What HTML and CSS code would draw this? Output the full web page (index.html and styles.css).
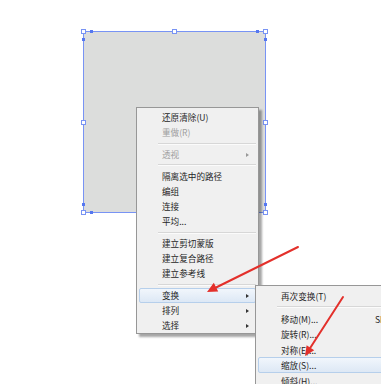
FILE: index.html
```html
<!DOCTYPE html>
<html>
<head>
<meta charset="utf-8">
<link rel="stylesheet" href="styles.css">
</head>
<body>
<div class="stage">
  <div class="shape">
    <span class="h sq" style="left:-3px;top:-3px"></span>
    <span class="h sq" style="left:88px;top:-3px"></span>
    <span class="h sq" style="right:-3px;top:-3px"></span>
    <span class="h sq" style="left:-3px;top:88px"></span>
    <span class="h sq" style="right:-3px;top:88px"></span>
    <span class="h sq" style="left:-3px;bottom:-3px"></span>
    <span class="h sq" style="right:-3px;bottom:-3px"></span>
    <span class="h dot" style="left:6px;top:-2px"></span>
    <span class="h dot" style="left:-2px;top:6px"></span>
    <span class="h dot" style="right:6px;top:-2px"></span>
    <span class="h dot" style="right:-2px;top:6px"></span>
    <span class="h dot" style="left:-2px;bottom:6px"></span>
    <span class="h dot" style="left:6px;bottom:-2px"></span>
    <span class="h dot" style="right:-2px;bottom:6px"></span>
  </div>

  <div class="menu main">
    <div class="item">还原清除(U)</div>
    <div class="item dis">重做(R)</div>
    <div class="sep"></div>
    <div class="item dis sub">透视</div>
    <div class="sep"></div>
    <div class="item">隔离选中的路径</div>
    <div class="item">编组</div>
    <div class="item">连接</div>
    <div class="item">平均...</div>
    <div class="sep"></div>
    <div class="item">建立剪切蒙版</div>
    <div class="item">建立复合路径</div>
    <div class="item">建立参考线</div>
    <div class="sep"></div>
    <div class="item sub hi">变换</div>
    <div class="item sub">排列</div>
    <div class="item sub">选择</div>
  </div>

  <div class="menu submenu">
    <div class="item">再次变换(T)</div>
    <div class="sep"></div>
    <div class="item">移动(M)...<span class="key">Shift+Ctrl+M</span></div>
    <div class="item">旋转(R)...</div>
    <div class="item">对称(E)...</div>
    <div class="item hi">缩放(S)...</div>
    <div class="item">倾斜(H)...</div>
  </div>

  <svg class="arrows" width="381" height="384" viewBox="0 0 381 384">
    <line x1="298" y1="247" x2="214" y2="288.5" stroke="#e3302b" stroke-width="2" stroke-linecap="round"/>
    <polygon points="207,292 218.2,291.6 213.8,282.8" fill="#e3302b"/>
    <line x1="343" y1="297" x2="309.5" y2="349" stroke="#e3302b" stroke-width="2" stroke-linecap="round"/>
    <polygon points="305,356 314.2,350.2 306.6,345.2" fill="#e3302b"/>
  </svg>
</div>
</body>
</html>
```
FILE: styles.css
```css
html, body {
  margin: 0;
  padding: 0;
  background: #fff;
}
.stage {
  position: relative;
  width: 381px;
  height: 384px;
  overflow: hidden;
  background: #fff;
  font-family: "Noto Sans CJK SC", "Microsoft YaHei", sans-serif;
}
.shape {
  position: absolute;
  left: 83px;
  top: 31px;
  width: 183px;
  height: 182px;
  box-sizing: border-box;
  background: #dcdddc;
  border: 1px solid #7893f4;
}
.h {
  position: absolute;
  box-sizing: border-box;
}
.sq {
  width: 5px;
  height: 5px;
  background: #fff;
  border: 1px solid #7893f4;
}
.dot {
  width: 3px;
  height: 3px;
  background: #5577f0;
}
.menu {
  position: absolute;
  box-sizing: border-box;
  background: #f0f0f0;
  border: 1px solid #979797;
  box-shadow: 3px 3px 2px rgba(0, 0, 0, 0.35);
  font-size: 8.6px;
  color: #262626;
}
.main {
  left: 136px;
  top: 107px;
  width: 123px;
  padding: 2px 2px 0 2px;
}
.submenu {
  left: 255px;
  top: 285px;
  width: 140px;
  padding: 2px 2px 0 2px;
}
.item {
  position: relative;
  height: 15.2px;
  line-height: 15.2px;
  padding-left: 22px;
  box-sizing: border-box;
  white-space: nowrap;
  border: 1px solid transparent;
  border-radius: 2px;
}
.submenu .item {
  height: 15.4px;
  line-height: 14px;
}
.main .item {
  line-height: 13.6px;
}
.dis {
  color: #a0a0a0;
}
.sub::after {
  content: "";
  position: absolute;
  right: 6px;
  top: 5px;
  border-left: 3px solid #333;
  border-top: 2.5px solid transparent;
  border-bottom: 2.5px solid transparent;
}
.dis.sub::after {
  border-left-color: #999;
}
.hi {
  background: linear-gradient(#f1f6fc, #dde8f5);
  border-color: #b6cfeb;
}
.sep {
  height: 1px;
  background: #d7d7d7;
  border-bottom: 1px solid #fbfbfb;
  margin: 2.25px 0 2.25px 19px;
}
.submenu .sep {
  margin: 2.8px 0 2.8px 19px;
}
.key {
  position: absolute;
  left: 116px;
  top: 0;
}
.arrows {
  position: absolute;
  left: 0;
  top: 0;
}
```
